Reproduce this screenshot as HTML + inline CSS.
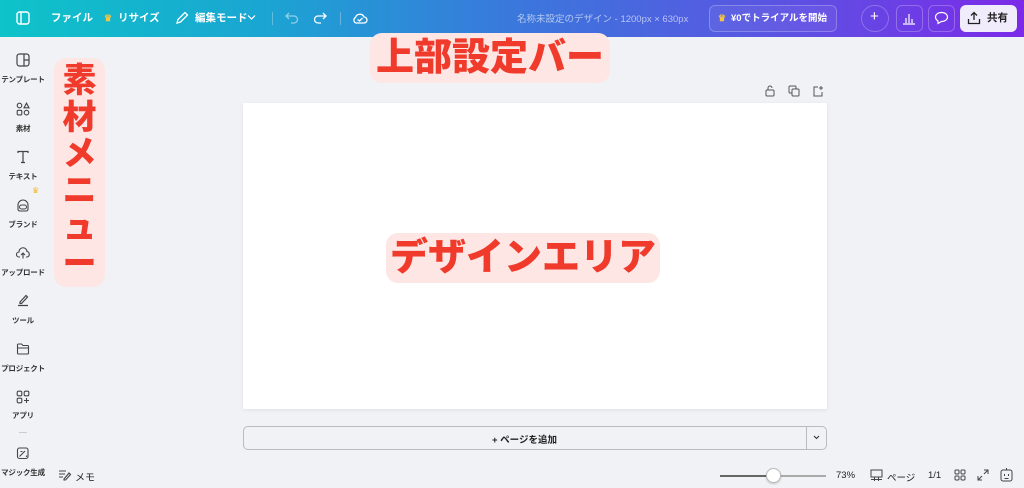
<!DOCTYPE html>
<html><head><meta charset="utf-8"><style>
*{margin:0;padding:0;box-sizing:border-box}
body{width:1024px;height:488px;overflow:hidden;background:#f1f2f6;font-family:"Liberation Sans","Noto Sans CJK JP",sans-serif;position:relative;color:#333}
.top{position:absolute;left:0;top:0;width:1024px;height:37px;background:linear-gradient(90deg,#0ec3c9 0%,#1aa6d2 25%,#3a78dc 50%,#5a55e2 75%,#7c2ae8 100%);color:#fff;font-size:10.5px;font-weight:bold}
.top span,.top div{position:absolute;white-space:nowrap;line-height:13px}
.side{position:absolute;left:-4px;width:54px;text-align:center;font-size:7.5px;color:#333;font-weight:bold;white-space:nowrap;letter-spacing:-0.2px}
.ico{position:absolute;left:16px;width:14px;height:14px}
.lbl{position:absolute;background:#fde6e3;color:#f03a2c;font-weight:900;border-radius:12px;text-align:center}
</style></head><body>
<div class="top">
<svg style="position:absolute;left:16px;top:11px" width="14" height="14" viewBox="0 0 14 14"><rect x="1" y="1" width="12" height="12" rx="2.5" fill="none" stroke="#fff" stroke-width="1.4"/><line x1="5" y1="1" x2="5" y2="13" stroke="#fff" stroke-width="1.4"/></svg>
<span style="left:51px;top:12px">ファイル</span>
<span style="left:104px;top:12px;color:#f5c542;font-size:9px">♛</span>
<span style="left:118px;top:12px">リサイズ</span>
<svg style="position:absolute;left:175px;top:11px" width="14" height="14" viewBox="0 0 14 14"><path d="M2 12 L3 8.5 L10 1.5 L12.5 4 L5.5 11 Z" fill="none" stroke="#fff" stroke-width="1.3"/></svg>
<span style="left:195px;top:12px">編集モード</span>
<svg style="position:absolute;left:247px;top:14px" width="9" height="7" viewBox="0 0 9 7"><path d="M1 1.5L4.5 5L8 1.5" fill="none" stroke="#fff" stroke-width="1.2"/></svg>
<div style="left:272px;top:12px;width:1px;height:13px;background:rgba(255,255,255,.3)"></div>
<svg style="position:absolute;left:285px;top:12px" width="14" height="12" viewBox="0 0 14 12"><path d="M4 1L1 4L4 7M1 4H9A3.5 3.5 0 0 1 9 11H6" fill="none" stroke="rgba(255,255,255,.5)" stroke-width="1.3"/></svg>
<svg style="position:absolute;left:313px;top:12px" width="14" height="12" viewBox="0 0 14 12"><path d="M10 1L13 4L10 7M13 4H5A3.5 3.5 0 0 0 5 11H8" fill="none" stroke="#fff" stroke-width="1.3"/></svg>
<div style="left:340px;top:12px;width:1px;height:13px;background:rgba(255,255,255,.3)"></div>
<svg style="position:absolute;left:352px;top:11px" width="16" height="14" viewBox="0 0 16 14"><path d="M4 12 H12 A3 3 0 0 0 12 6 A4.5 4.5 0 0 0 3.5 6.5 A3 3 0 0 0 4 12 Z" fill="none" stroke="#fff" stroke-width="1.3"/><path d="M5.5 8.5 L7.5 10 L10.5 7" fill="none" stroke="#fff" stroke-width="1.3"/></svg>
<span style="left:517px;top:13px;font-weight:normal;font-size:9.5px;color:rgba(255,255,255,.6)">名称未設定のデザイン - 1200px × 630px</span>
<div style="left:709px;top:5px;width:128px;height:27px;border:1px solid rgba(255,255,255,.25);border-radius:6px;background:rgba(255,255,255,.05)"></div>
<span style="left:718px;top:12px;color:#f5c542;font-size:9px">♛</span>
<span style="left:731px;top:12px;font-size:9.5px">¥0でトライアルを開始</span>
<div style="left:861px;top:5px;width:28px;height:27px;border:1px solid rgba(255,255,255,.25);border-radius:14px"></div>
<span style="left:870px;top:10px;font-size:15px;font-weight:normal">+</span>
<div style="left:896px;top:5px;width:27px;height:27px;border:1px solid rgba(255,255,255,.25);border-radius:6px"></div>
<svg style="position:absolute;left:902px;top:11px" width="14" height="14" viewBox="0 0 14 14"><path d="M1 13H13M4 12V7M7 12V3M10 12V8" stroke="#fff" stroke-width="1.2"/></svg>
<div style="left:928px;top:5px;width:27px;height:27px;border:1px solid rgba(255,255,255,.25);border-radius:6px"></div>
<svg style="position:absolute;left:934px;top:11px" width="15" height="14" viewBox="0 0 15 14"><path d="M7.5 1.5C11 1.5 13.5 3.5 13.5 6S11 10.5 7.5 10.5L4 12.5V10C2.5 9 1.5 7.7 1.5 6C1.5 3.5 4 1.5 7.5 1.5Z" fill="none" stroke="#fff" stroke-width="1.2"/></svg>
<div style="left:960px;top:5px;width:57px;height:27px;background:#f0ecfb;border-radius:6px"></div>
<svg style="position:absolute;left:967px;top:11px" width="14" height="14" viewBox="0 0 14 14"><path d="M1.5 8V12.5H12.5V8M7 9V1.5M4 4.5L7 1.5L10 4.5" fill="none" stroke="#222" stroke-width="1.3"/></svg>
<span style="left:987px;top:12px;color:#222">共有</span>
</div>

<svg class="ico" style="top:53px" viewBox="0 0 14 14"><rect x="1" y="1" width="12" height="12" rx="2.5" fill="none" stroke="#444" stroke-width="1.2"/><path d="M8 1V13M8 7H13" stroke="#444" stroke-width="1.2"/></svg>
<div class="side" style="top:74px">テンプレート</div>
<svg class="ico" style="top:102px" viewBox="0 0 14 14"><circle cx="3.5" cy="3.5" r="2.3" fill="none" stroke="#444" stroke-width="1.1"/><path d="M10.5 1.2L13 5.8H8Z" fill="none" stroke="#444" stroke-width="1.1"/><rect x="1.2" y="8.3" width="4.6" height="4.6" rx="1" fill="none" stroke="#444" stroke-width="1.1"/><rect x="8.2" y="8.3" width="4.6" height="4.6" rx="2.3" fill="none" stroke="#444" stroke-width="1.1"/></svg>
<div class="side" style="top:123px">素材</div>
<svg class="ico" style="top:150px" viewBox="0 0 14 14"><path d="M2 3V1.5H12V3M7 1.5V12.5M5 12.5H9" fill="none" stroke="#444" stroke-width="1.2"/></svg>
<div class="side" style="top:171px">テキスト</div>
<span style="position:absolute;left:32px;top:186px;color:#f2b632;font-size:8px">♛</span>
<svg class="ico" style="top:198px" viewBox="0 0 14 14"><path d="M2 11V7A5 5 0 0 1 12 7V11Q12 13 10 13H4Q2 13 2 11Z" fill="none" stroke="#444" stroke-width="1.1"/><rect x="3.5" y="7" width="7" height="4" rx="2" fill="none" stroke="#444" stroke-width="1"/></svg>
<div class="side" style="top:219px">ブランド</div>
<svg class="ico" style="top:246px" viewBox="0 0 14 14"><path d="M4 11H3A2.5 2.5 0 0 1 3 6A4 4 0 0 1 11 5.5A2.8 2.8 0 0 1 11 11H10M7 12.5V7M5 9L7 7L9 9" fill="none" stroke="#444" stroke-width="1.1"/></svg>
<div class="side" style="top:267px">アップロード</div>
<svg class="ico" style="top:293px" viewBox="0 0 14 14"><path d="M4 9L10 2.5L11.5 4L5.5 10.5H4Z M2 12.5H12" fill="none" stroke="#444" stroke-width="1.2"/></svg>
<div class="side" style="top:315px">ツール</div>
<svg class="ico" style="top:342px" viewBox="0 0 14 14"><path d="M1.5 3Q1.5 2 2.5 2H5.5L7 3.5H11.5Q12.5 3.5 12.5 4.5V11Q12.5 12 11.5 12H2.5Q1.5 12 1.5 11Z M1.5 6H12.5" fill="none" stroke="#444" stroke-width="1.1"/></svg>
<div class="side" style="top:363px">プロジェクト</div>
<svg class="ico" style="top:390px" viewBox="0 0 14 14"><rect x="1.2" y="1.2" width="4.6" height="4.6" rx="1.2" fill="none" stroke="#444" stroke-width="1.1"/><rect x="8.2" y="1.2" width="4.6" height="4.6" rx="1.2" fill="none" stroke="#444" stroke-width="1.1"/><rect x="1.2" y="8.2" width="4.6" height="4.6" rx="1.2" fill="none" stroke="#444" stroke-width="1.1"/><path d="M10.5 8V13M8 10.5H13" stroke="#444" stroke-width="1.1"/></svg>
<div class="side" style="top:410px">アプリ</div>
<div style="position:absolute;left:19px;top:432px;width:8px;height:1px;background:#ccc"></div>
<svg class="ico" style="top:446px" viewBox="0 0 14 14"><rect x="1.5" y="2" width="10.5" height="10.5" rx="2" fill="none" stroke="#444" stroke-width="1.1"/><path d="M3.5 10.5L9 5M4.5 5.5h2M10.5 9.5v1.5" stroke="#444" stroke-width="1.1"/></svg>
<div class="side" style="top:467px">マジック生成</div>

<div class="lbl" style="left:54px;top:58px;width:51px;height:229px;font-size:34px;line-height:36.5px;padding-top:5px">素<br>材<br>メ<br>ニ<br>ュ<br>ー</div>
<div class="lbl" style="left:370px;top:33px;width:240px;height:50px;font-size:38px;line-height:50px;white-space:nowrap">上部設定バー</div>

<svg style="position:absolute;left:764px;top:85px" width="12" height="12" viewBox="0 0 12 12"><rect x="2" y="5" width="8" height="6" rx="1" fill="none" stroke="#555"/><path d="M4 5V3A2 2 0 0 1 8 3" fill="none" stroke="#555"/></svg>
<svg style="position:absolute;left:788px;top:85px" width="12" height="12" viewBox="0 0 12 12"><rect x="1" y="1" width="7" height="7" rx="1" fill="none" stroke="#555"/><rect x="4" y="4" width="7" height="7" rx="1" fill="#f1f2f6" stroke="#555"/></svg>
<svg style="position:absolute;left:812px;top:85px" width="12" height="12" viewBox="0 0 12 12"><path d="M6 2H2V11H10V7M9 1V5M7 3H11" fill="none" stroke="#555"/></svg>

<div style="position:absolute;left:243px;top:103px;width:584px;height:306px;background:#fff;box-shadow:0 1px 4px rgba(0,0,0,.08)"></div>
<div class="lbl" style="left:386px;top:233px;width:274px;height:50px;font-size:38px;line-height:50px;white-space:nowrap">デザインエリア</div>

<div style="position:absolute;left:243px;top:426px;width:584px;height:24px;border:1px solid #bbb;border-radius:5px"></div>
<div style="position:absolute;left:806px;top:426px;width:1px;height:24px;background:#bbb"></div>
<div style="position:absolute;left:243px;top:432px;width:563px;text-align:center;font-size:9.5px;font-weight:bold;color:#222">+ ページを追加</div>
<svg style="position:absolute;left:813px;top:435px" width="7" height="5" viewBox="0 0 7 5"><path d="M1 1L3.5 3.5L6 1" fill="none" stroke="#333" stroke-width="1.1"/></svg>

<svg style="position:absolute;left:58px;top:469px" width="14" height="12" viewBox="0 0 14 12"><path d="M1 2H8M1 5H7M1 8H5M6 10L11 4L12.5 5.5L7.5 11H6Z" fill="none" stroke="#444" stroke-width="1.1"/></svg>
<div style="position:absolute;left:75px;top:469px;font-size:10px;color:#222">メモ</div>

<div style="position:absolute;left:720px;top:475px;width:106px;height:2px;background:#aaa"></div>
<div style="position:absolute;left:720px;top:475px;width:53px;height:2px;background:#666"></div>
<div style="position:absolute;left:766px;top:468px;width:15px;height:15px;border-radius:50%;background:#fff;border:1px solid #bbb;box-shadow:0 1px 2px rgba(0,0,0,.2)"></div>
<div style="position:absolute;left:836px;top:470px;font-size:9.5px;color:#222">73%</div>
<svg style="position:absolute;left:870px;top:469px" width="13" height="12" viewBox="0 0 13 12"><rect x="1" y="1" width="11" height="7" fill="none" stroke="#444"/><path d="M1 10.5H12M4.5 8V12M8.5 8V12" stroke="#444"/></svg>
<div style="position:absolute;left:887px;top:470px;font-size:9.5px;color:#222">ページ</div>
<div style="position:absolute;left:928px;top:470px;font-size:9.5px;color:#222">1/1</div>
<svg style="position:absolute;left:954px;top:469px" width="12" height="12" viewBox="0 0 12 12"><rect x="1" y="1" width="4" height="4" rx="1" fill="none" stroke="#444"/><rect x="7" y="1" width="4" height="4" rx="1" fill="none" stroke="#444"/><rect x="1" y="7" width="4" height="4" rx="1" fill="none" stroke="#444"/><rect x="7" y="7" width="4" height="4" rx="1" fill="none" stroke="#444"/></svg>
<svg style="position:absolute;left:977px;top:469px" width="12" height="12" viewBox="0 0 12 12"><path d="M7 1H11V5M11 1L7 5M5 11H1V7M1 11L5 7" fill="none" stroke="#444"/></svg>
<svg style="position:absolute;left:1000px;top:467px" width="13" height="15" viewBox="0 0 13 15"><rect x="1" y="3" width="11" height="11" rx="2" fill="none" stroke="#444"/><path d="M6.5 1V3M4.5 7V9M8.5 7V9M4.5 11.5H8.5" stroke="#444"/></svg>
</body></html>
